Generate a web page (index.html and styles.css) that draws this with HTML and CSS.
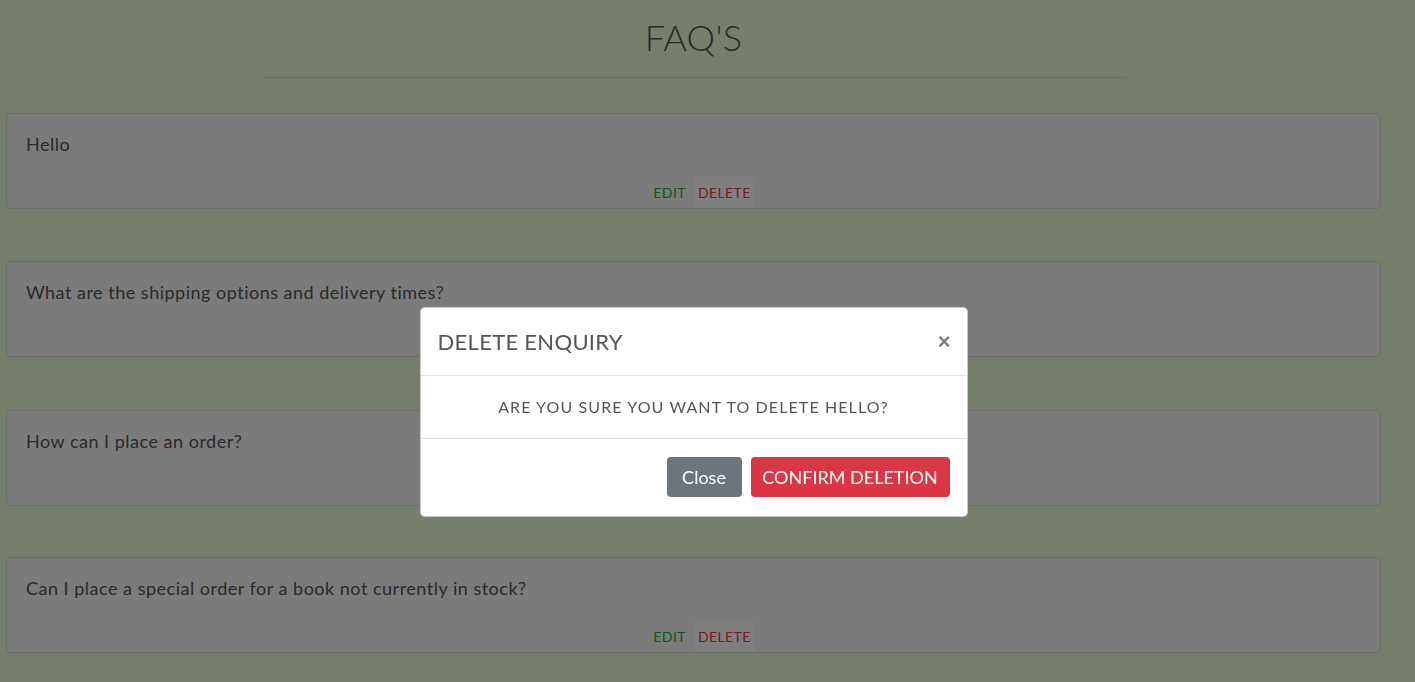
FILE: index.html
```html
<!DOCTYPE html>
<html lang="en">
<head>
<meta charset="utf-8">
<title>FAQ's</title>
<link rel="stylesheet" href="styles.css">
</head>
<body>
<main class="page">
  <h1 class="page-title">FAQ'S</h1>
  <hr class="title-rule">
  <section class="faq-list">
    <article class="faq-card">
      <p class="faq-question">Hello</p>
      <div class="faq-actions">
        <button class="action action-edit">Edit</button>
        <button class="action action-delete">Delete</button>
      </div>
    </article>
    <article class="faq-card">
      <p class="faq-question">What are the shipping options and delivery times?</p>
      <div class="faq-actions">
        <button class="action action-edit">Edit</button>
        <button class="action action-delete plain">Delete</button>
      </div>
    </article>
    <article class="faq-card">
      <p class="faq-question">How can I place an order?</p>
      <div class="faq-actions">
        <button class="action action-edit">Edit</button>
        <button class="action action-delete plain">Delete</button>
      </div>
    </article>
    <article class="faq-card">
      <p class="faq-question">Can I place a special order for a book not currently in stock?</p>
      <div class="faq-actions">
        <button class="action action-edit">Edit</button>
        <button class="action action-delete">Delete</button>
      </div>
    </article>
  </section>
</main>

<div class="backdrop"></div>
<div class="modal-layer">
  <div class="modal" role="dialog">
    <div class="modal-header">
      <h5 class="modal-title">DELETE ENQUIRY</h5>
      <span class="modal-close">&times;</span>
    </div>
    <div class="modal-body">ARE YOU SURE YOU WANT TO DELETE HELLO?</div>
    <div class="modal-footer">
      <button class="btn btn-secondary">Close</button>
      <button class="btn btn-danger">CONFIRM DELETION</button>
    </div>
  </div>
</div>
</body>
</html>
```
FILE: styles.css
```css
* { box-sizing: border-box; }

html, body {
  margin: 0;
  height: 100%;
}

body {
  background: #eaffd6;
  font-family: Lato, "Open Sans", "Liberation Sans", sans-serif;
  color: #555;
  padding-right: 28px;
  overflow: hidden;
}

.page {
  padding: 16px 6px 0;
}

.page-title {
  margin: 0;
  text-align: center;
  font-size: 36px;
  line-height: 43px;
  font-weight: 300;
  color: #555;
  letter-spacing: 0.3px;
}

.title-rule {
  width: 863px;
  margin: 18px auto 0;
  border: 0;
  border-top: 1px solid rgba(0, 0, 0, 0.1);
}

.faq-list {
  display: flex;
  flex-direction: column;
  gap: 52px;
  margin-top: 35px;
}

.faq-card {
  height: 96px;
  background: #f6f6f6;
  border: 1px solid #dcdcdc;
  border-radius: 4px;
  padding: 17px 19px 0;
  display: flex;
  flex-direction: column;
}

.faq-card:nth-child(3) {
  margin-top: 1px;
  margin-bottom: -1px;
}

.faq-question {
  margin: 0;
  font-size: 18px;
  line-height: 27px;
  color: #555;
  letter-spacing: 0.5px;
}

.faq-actions {
  margin-top: auto;
  display: flex;
  justify-content: center;
  gap: 4px;
  padding-left: 17px;
}

.action {
  font-family: inherit;
  font-size: 14px;
  text-transform: uppercase;
  letter-spacing: 0.4px;
  border: 0;
  background: transparent;
  padding: 0 4px;
  height: 31px;
  line-height: 31px;
  margin: 0;
}

.action-edit { color: #28a745; }
.action-delete { color: #e03a4a; background: #ffffff; }
.action-delete.plain { background: transparent; }

.backdrop {
  position: fixed;
  inset: 0;
  background: rgba(0, 0, 0, 0.5);
}

.modal-layer {
  position: fixed;
  inset: 0;
  padding: 307px 28px 0 0;
  display: flex;
  justify-content: center;
  align-items: flex-start;
}

.modal {
  width: 548px;
  background: #fff;
  border: 1px solid rgba(0, 0, 0, 0.2);
  border-radius: 5px;
}

.modal-header {
  display: flex;
  align-items: center;
  justify-content: space-between;
  padding: 16px 18px 16px 17px;
  border-bottom: 1px solid #dee2e6;
}

.modal-title {
  margin: 0;
  font-size: 22px;
  line-height: 35px;
  font-weight: 400;
  color: #555;
  letter-spacing: 0.3px;
}

.modal-close {
  font-family: "Liberation Sans", Arial, sans-serif;
  font-size: 22px;
  font-weight: 700;
  line-height: 22px;
  color: #000;
  opacity: 0.5;
  margin-right: -2px;
}

.modal-body {
  padding: 19px 16px;
  text-align: center;
  font-size: 16px;
  line-height: 24px;
  color: #555;
  border-bottom: 1px solid #dee2e6;
  letter-spacing: 1.1px;
}

.modal-footer {
  display: flex;
  justify-content: flex-end;
  gap: 9px;
  padding: 18px 17px 19px;
}

.btn {
  font-family: inherit;
  font-size: 18px;
  line-height: 24px;
  height: 40px;
  border: 0;
  border-radius: 4px;
  color: #fff;
  padding: 0;
  text-align: center;
}

.btn-secondary {
  background: #6c757d;
  width: 75px;
}

.btn-danger {
  background: #dc3545;
  width: 199px;
}
```
